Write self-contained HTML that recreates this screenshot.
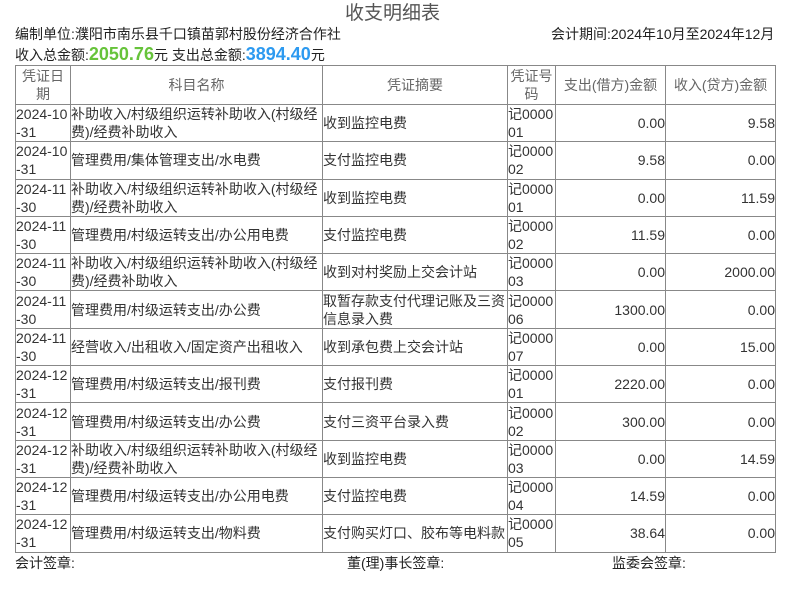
<!DOCTYPE html>
<html><head><meta charset="utf-8"><style>
body{margin:0;width:785px;height:589px;background:#fff;font-family:"Liberation Sans","Noto Sans CJK SC",sans-serif;color:#222;font-size:14px;position:relative;overflow:hidden}
.t{position:absolute;top:3px;left:0;width:785px;text-align:center;font-size:19px;color:#555;line-height:22px}
.l{position:absolute;font-size:14px;line-height:16px;white-space:nowrap}
.g{color:#66c33a;font-weight:bold;font-size:18px}
.b{color:#2d9af0;font-weight:bold;font-size:18px}
table{position:absolute;left:15px;top:65px;border-collapse:collapse;table-layout:fixed;width:760px}
td,th{border:1px solid #888;padding:0;font-size:14px;line-height:18px;overflow:hidden;word-break:break-all}
th{font-weight:normal;color:#666;height:38px}
td{height:36.3px;color:#333}
.r{text-align:right}
</style></head><body>
<div class="t">收支明细表</div>
<div class="l" style="left:15px;top:26px">编制单位:濮阳市南乐县千口镇苗郭村股份经济合作社</div>
<div class="l" style="left:551px;top:26px">会计期间:2024年10月至2024年12月</div>
<div class="l" style="left:15px;top:46px">收入总金额:<span class="g">2050.76</span>元 支出总金额:<span class="b">3894.40</span>元</div>
<table>
<colgroup><col style="width:55px"><col style="width:252px"><col style="width:185px"><col style="width:48px"><col style="width:110px"><col style="width:110px"></colgroup>
<tr><th>凭证日期</th><th>科目名称</th><th>凭证摘要</th><th>凭证号码</th><th>支出(借方)金额</th><th>收入(贷方)金额</th></tr>
<tr><td>2024-10-31</td><td>补助收入/村级组织运转补助收入(村级经费)/经费补助收入</td><td>收到监控电费</td><td>记000001</td><td class="r">0.00</td><td class="r">9.58</td></tr>
<tr><td>2024-10-31</td><td>管理费用/集体管理支出/水电费</td><td>支付监控电费</td><td>记000002</td><td class="r">9.58</td><td class="r">0.00</td></tr>
<tr><td>2024-11-30</td><td>补助收入/村级组织运转补助收入(村级经费)/经费补助收入</td><td>收到监控电费</td><td>记000001</td><td class="r">0.00</td><td class="r">11.59</td></tr>
<tr><td>2024-11-30</td><td>管理费用/村级运转支出/办公用电费</td><td>支付监控电费</td><td>记000002</td><td class="r">11.59</td><td class="r">0.00</td></tr>
<tr><td>2024-11-30</td><td>补助收入/村级组织运转补助收入(村级经费)/经费补助收入</td><td>收到对村奖励上交会计站</td><td>记000003</td><td class="r">0.00</td><td class="r">2000.00</td></tr>
<tr><td>2024-11-30</td><td>管理费用/村级运转支出/办公费</td><td>取暂存款支付代理记账及三资信息录入费</td><td>记000006</td><td class="r">1300.00</td><td class="r">0.00</td></tr>
<tr><td>2024-11-30</td><td>经营收入/出租收入/固定资产出租收入</td><td>收到承包费上交会计站</td><td>记000007</td><td class="r">0.00</td><td class="r">15.00</td></tr>
<tr><td>2024-12-31</td><td>管理费用/村级运转支出/报刊费</td><td>支付报刊费</td><td>记000001</td><td class="r">2220.00</td><td class="r">0.00</td></tr>
<tr><td>2024-12-31</td><td>管理费用/村级运转支出/办公费</td><td>支付三资平台录入费</td><td>记000002</td><td class="r">300.00</td><td class="r">0.00</td></tr>
<tr><td>2024-12-31</td><td>补助收入/村级组织运转补助收入(村级经费)/经费补助收入</td><td>收到监控电费</td><td>记000003</td><td class="r">0.00</td><td class="r">14.59</td></tr>
<tr><td>2024-12-31</td><td>管理费用/村级运转支出/办公用电费</td><td>支付监控电费</td><td>记000004</td><td class="r">14.59</td><td class="r">0.00</td></tr>
<tr><td>2024-12-31</td><td>管理费用/村级运转支出/物料费</td><td>支付购买灯口、胶布等电料款</td><td>记000005</td><td class="r">38.64</td><td class="r">0.00</td></tr>
</table>
<div class="l" style="left:15px;top:555px">会计签章:</div>
<div class="l" style="left:347px;top:555px">董(理)事长签章:</div>
<div class="l" style="left:612px;top:555px">监委会签章:</div>
</body></html>
